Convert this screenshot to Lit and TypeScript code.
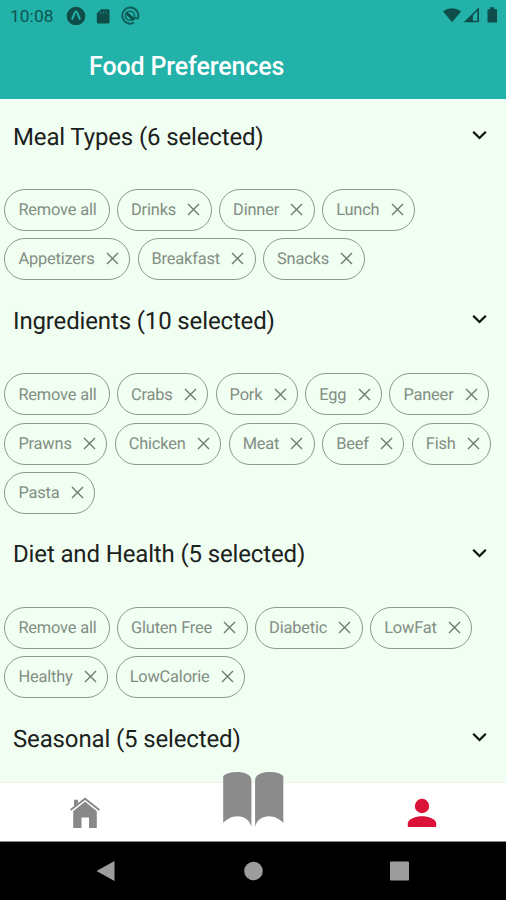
import { LitElement, html, css } from "lit";
import { customElement, property } from "lit/decorators.js";

interface Section {
  title: string;
  items: string[];
  count: number;
}

const SECTIONS: Section[] = [
  { title: "Meal Types", count: 6, items: ["Drinks", "Dinner", "Lunch", "Appetizers", "Breakfast", "Snacks"] },
  {
    title: "Ingredients",
    count: 10,
    items: ["Crabs", "Pork", "Egg", "Paneer", "Prawns", "Chicken", "Meat", "Beef", "Fish", "Pasta"],
  },
  { title: "Diet and Health", count: 5, items: ["Gluten Free", "Diabetic", "LowFat", "Healthy", "LowCalorie"] },
  { title: "Seasonal", count: 5, items: [] },
];

@customElement("preference-chip")
export class PreferenceChip extends LitElement {
  @property() label = "";
  @property({ type: Boolean }) removable = false;

  static styles = css`
    :host {
      display: flex;
      align-items: center;
      box-sizing: border-box;
      height: 42px;
      padding: 1.4px 12px 0 13px;
      border: 1.3px solid #8c998d;
      border-radius: 21px;
      color: #838d84;
      font-size: 16.4px;
      letter-spacing: -0.17px;
      white-space: nowrap;
      text-rendering: geometricPrecision;
    }
    .cross {
      width: 13px;
      height: 13px;
      margin: -2px -1.6px 0 11.2px;
      stroke: #6f7870;
      stroke-width: 1.4;
      fill: none;
    }
  `;

  render() {
    return html`<span>${this.label}</span>${this.removable
        ? html`<svg class="cross" viewBox="0 0 13 13"><path d="M1 1L12 12M12 1L1 12" /></svg>`
        : null}`;
  }
}

@customElement("preference-section")
export class PreferenceSection extends LitElement {
  @property({ attribute: false }) section!: Section;

  static styles = css`
    :host {
      display: block;
      flex: none;
    }
    .head {
      display: flex;
      align-items: center;
      justify-content: space-between;
      height: 76px;
      padding: 0 18px 0 13px;
      color: #1c211d;
      font-size: 24px;
      letter-spacing: -0.14px;
      text-rendering: geometricPrecision;
    }
    .chevron {
      width: 17px;
      height: 12px;
      margin-top: -3px;
      fill: none;
      stroke: #111;
      stroke-width: 2.3;
    }
    .chips {
      display: flex;
      flex-wrap: wrap;
      gap: 7.2px 7.4px;
      padding: 14.5px 4px 2.7px 4.4px;
    }
  `;

  render() {
    const { title, count, items } = this.section;
    return html`
      <div class="head">
        <span>${title} (${count} selected)</span>
        <svg class="chevron" viewBox="0 0 17 12"><path d="M2.2 2.8L8.5 9L14.8 2.8" /></svg>
      </div>
      ${items.length
        ? html`<div class="chips">
            <preference-chip label="Remove all"></preference-chip>
            ${items.map((i) => html`<preference-chip label=${i} removable></preference-chip>`)}
          </div>`
        : null}
    `;
  }
}

@customElement("app-root")
export class AppRoot extends LitElement {
  static styles = css`
    :host {
      display: flex;
      flex-direction: column;
      height: 900px;
      overflow: hidden;
      background: #f0fff1;
      font-family: Roboto, "Liberation Sans", sans-serif;
    }
    .top {
      flex: none;
      height: 98.5px;
      background: #22b2aa;
    }
    .status {
      display: flex;
      align-items: center;
      height: 32px;
      padding: 0 8px 0 10px;
      color: #0e5550;
      font-size: 17.3px;
    }
    .time {
      width: 56px;
      letter-spacing: 0.1px;
    }
    .status-icons {
      width: 74px;
      height: 20px;
      margin-top: -2px;
    }
    .signals {
      width: 56px;
      height: 20px;
      margin: -2px 0 0 auto;
    }
    .title {
      margin: 0;
      padding: 19px 0 0 89px;
      color: #fff;
      font-size: 25px;
      letter-spacing: -0.13px;
      font-weight: 500;
      line-height: 32px;
    }
    .content {
      flex: 1;
      min-height: 0;
      overflow: hidden;
    }
    .tabs {
      position: relative;
      flex: none;
      display: grid;
      grid-template-columns: repeat(3, 1fr);
      justify-items: center;
      height: 60px;
      padding-left: 1px;
      background: #fff;
      border-top: 1px solid #eef3ee;
      border-bottom: 1.5px solid #888;
      box-sizing: border-box;
    }
    .home {
      width: 32px;
      height: 32px;
      margin-top: 14px;
    }
    .book {
      width: 62px;
      height: 56px;
      margin-top: -12px;
    }
    .person {
      width: 30px;
      height: 30px;
      margin: 15.5px 0 0 1px;
    }
    .system {
      flex: none;
      display: flex;
      align-items: center;
      justify-content: space-between;
      height: 58.5px;
      padding: 0 96px;
      box-sizing: border-box;
      background: #000;
    }
    .nav {
      width: 22px;
      height: 22px;
      fill: #9d9d9d;
    }
  `;

  render() {
    return html`
      <header class="top">
        <div class="status">
          <span class="time">10:08</span>
          <svg class="status-icons" viewBox="0 0 74 20">
            <circle cx="10" cy="11" r="9.3" fill="#0e4d49" />
            <path d="M5.7 14.5C7.5 13 8.2 6.5 10 6.5S12.5 13 14.3 14.5" fill="none" stroke="#22b2aa" stroke-width="2.1" />
            <path d="M35.2 4.2H42.2Q43.5 4.2 43.5 5.5V17Q43.5 18.5 42 18.5H32.3Q30.8 18.5 30.8 17V8.6Z" fill="#0e4d49" />
            <path d="M34.5 6.5V9M37.2 6V9M40 6V9" stroke="#197f78" stroke-width="1" />
            <path d="M68 17.7A8 8 0 1 1 71.9 13.2H69" fill="none" stroke="#0e625c" stroke-width="2" />
            <circle cx="64" cy="10.8" r="4.5" fill="none" stroke="#0e625c" stroke-width="1.6" />
            <path d="M60.5 8L68 15" stroke="#0e4d49" stroke-width="2.6" />
          </svg>
          <svg class="signals" viewBox="0 0 56 20" fill="#0e4d49">
            <path d="M1 6.3Q10 0 19.2 6.3L10.1 17.3Z" />
            <path d="M21.7 17.3L37 2.2V17.3Z" />
            <path d="M30.9 10.2L35.3 6V15.7H30.9Z" fill="#22b2aa" />
            <path d="M45.5 4.2H48.1V2.2H52.3V4.2H55V17.5H45.5Z" />
          </svg>
        </div>
        <h1 class="title">Food Preferences</h1>
      </header>
      <main class="content">
        ${SECTIONS.map((s) => html`<preference-section .section=${s}></preference-section>`)}
      </main>
      <nav class="tabs">
        <svg class="home" viewBox="0 0 32 32">
          <path d="M4.2 14L16 4.2L27.8 14V31H20V20.5H12.5V31H4.2Z" fill="#888" />
          <path d="M2 13.2L16 2L30 13.2" fill="none" stroke="#fff" stroke-width="4" />
          <path d="M1.6 13L16 1.8L30.4 13" fill="none" stroke="#888" stroke-width="2" />
          <path d="M5 9.8V2.8H9V6.5Z" fill="#888" />
        </svg>
        <svg class="book" viewBox="0 0 62 56" fill="#8b8b8b">
          <path d="M1.2 5C4 2.2 9 0.9 15 0.9C22 0.9 29.4 3.5 29.4 9V55.8C28 49 22 45.2 15.5 45.2C9.5 45.2 5 48 1.2 52Z" />
          <path d="M61.3 5C58.5 2.2 53.5 0.9 47.5 0.9C40.5 0.9 33.1 3.5 33.1 9V55.8C34.5 49 40.5 45.2 47 45.2C53 45.2 57.5 48 61.3 52Z" />
        </svg>
        <svg class="person" viewBox="0 0 30 30" fill="#dc1138">
          <circle cx="15" cy="8" r="7.2" />
          <path d="M0.8 29V25.5C0.8 21 9 18.3 15 18.3S29.2 21 29.2 25.5V29Z" />
        </svg>
      </nav>
      <footer class="system">
        <svg class="nav" viewBox="0 0 22 22"><path d="M0.5 11L18.5 1V21Z" /></svg>
        <svg class="nav" viewBox="0 0 22 22"><circle cx="11.5" cy="11" r="9.3" /></svg>
        <svg class="nav" viewBox="0 0 22 22"><rect x="2" y="1.5" width="19" height="19" rx="1" /></svg>
      </footer>
    `;
  }
}
